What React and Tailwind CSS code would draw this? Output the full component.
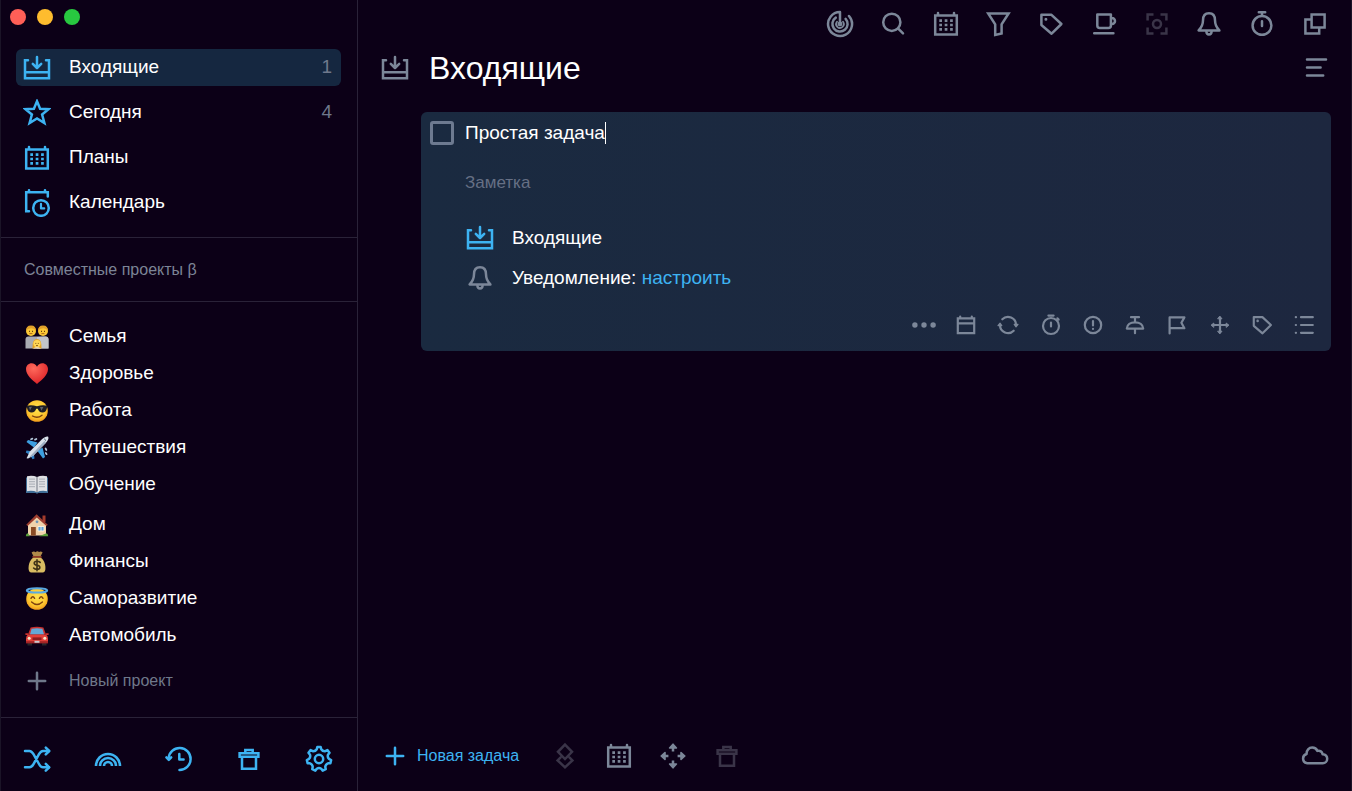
import { useState } from 'react'

const BLUE = 'text-[#3db3f2]'
const GRAY = 'text-[#7c8799]'
const DIM = 'text-[#3a3448]'

export default function App() {

    const [selected, setSelected] = useState('Входящие')

    return (
        <div className="min-h-screen flex bg-[#0c0017] border-x border-[#1b1427] text-white font-['Liberation_Sans',Arial,sans-serif]">
            <Sidebar selected={selected} onSelect={setSelected} />

            <main className="flex-1 min-w-0 flex flex-col">
                <TopBar />

                <div className="flex items-center pl-[23px] pr-[21px] h-10">
                    <span className={GRAY}><InboxIcon /></span>
                    <h1 className="flex-1 ml-5 text-[32px] leading-10">Входящие</h1>
                    <button type="button" aria-label="Меню" className={GRAY}><MenuIcon /></button>
                </div>

                <TaskCard />
                <BottomBar />
            </main>
        </div>
    )
}

/* ---------- Sidebar ---------- */

const navItems = [
    { label: 'Входящие', icon: InboxIcon, count: 1 },
    { label: 'Сегодня', icon: StarIcon, count: 4 },
    { label: 'Планы', icon: PlansIcon },
    { label: 'Календарь', icon: CalendarClockIcon },
]

const projectGroups = [
    [
        { label: 'Семья', icon: FamilyEmoji },
        { label: 'Здоровье', icon: HeartEmoji },
        { label: 'Работа', icon: CoolEmoji },
        { label: 'Путешествия', icon: PlaneEmoji },
        { label: 'Обучение', icon: BookEmoji },
    ],
    [
        { label: 'Дом', icon: HouseEmoji },
        { label: 'Финансы', icon: MoneyEmoji },
        { label: 'Саморазвитие', icon: HaloEmoji },
        { label: 'Автомобиль', icon: CarEmoji },
    ],
]

const footerItems = [
    { label: 'Перемешать', icon: ShuffleIcon },
    { label: 'Радуга', icon: RainbowIcon },
    { label: 'История', icon: HistoryIcon },
    { label: 'Корзина', icon: TrashIcon },
    { label: 'Настройки', icon: GearIcon },
]

function Sidebar({ selected, onSelect }) {
    return (
        <aside className="w-[357px] shrink-0 flex flex-col border-r border-[#2a2238]">

            {/* Window buttons */}
            <div className="flex gap-[11px] pl-[9px] pt-[9px]">
                <button type="button" aria-label="Закрыть" className="size-4 rounded-full bg-[#ff5f57]" />
                <button type="button" aria-label="Свернуть" className="size-4 rounded-full bg-[#febc2e]" />
                <button type="button" aria-label="Развернуть" className="size-4 rounded-full bg-[#28c840]" />
            </div>

            <nav className="flex flex-col gap-2 mt-6 px-4 pb-4 -ml-px">
                {navItems.map(({ label, icon: Icon, count }) => (
                    <button
                        key={label}
                        type="button"
                        onClick={() => onSelect(label)}
                        className={`flex items-center h-[37px] pl-[7px] pr-[9px] rounded-md text-left ${selected === label ? 'bg-[#152740]' : ''}`}
                    >
                        <span className={BLUE}><Icon /></span>
                        <span className="flex-1 ml-[18px] text-[19px]">{label}</span>
                        {count && <span className="text-[19px] text-[#6f788c]">{count}</span>}
                    </button>
                ))}
            </nav>

            <h2 className="border-y border-[#2a2238] pl-[23px] text-base leading-[63px] text-[#7c8496]">
                Совместные проекты β
            </h2>

            <div className="flex flex-col gap-[3px] pt-4">
                {projectGroups.map((group, i) => (
                    <ul key={i}>
                        {group.map(({ label, icon: Icon }) => (
                            <li key={label}>
                                <a href="#" className="flex items-center h-[37px] pl-6">
                                    <Icon />
                                    <span className="ml-5 text-[19px]">{label}</span>
                                </a>
                            </li>
                        ))}
                    </ul>
                ))}
            </div>

            <button type="button" className="flex items-center h-[37px] mt-2 pl-[22px] text-base text-[#6f788a]">
                <PlusIcon />
                <span className="ml-[18px]">Новый проект</span>
            </button>

            <div className={`flex justify-between mt-auto border-t border-[#2a2238] pt-[27px] pb-[18px] pl-[22px] pr-6 ${BLUE}`}>
                {footerItems.map(({ label, icon: Icon }) => (
                    <button key={label} type="button" aria-label={label}><Icon /></button>
                ))}
            </div>
        </aside>
    )
}

/* ---------- Main area ---------- */

const topItems = [
    { label: 'Обзор', icon: RadarIcon },
    { label: 'Поиск', icon: SearchIcon },
    { label: 'Планы', icon: PlansIcon },
    { label: 'Фильтр', icon: FilterIcon },
    { label: 'Метки', icon: TagIcon },
    { label: 'Перерыв', icon: CupIcon },
    { label: 'Фокус', icon: FocusIcon, dim: true },
    { label: 'Уведомления', icon: BellIcon },
    { label: 'Таймер', icon: TimerIcon },
    { label: 'Новое окно', icon: WindowsIcon },
]

const taskItems = [
    { label: 'Ещё', icon: DotsIcon },
    { label: 'Дата', icon: DateIcon },
    { label: 'Повтор', icon: RepeatIcon },
    { label: 'Таймер', icon: StopwatchIcon },
    { label: 'Приоритет', icon: AlertIcon },
    { label: 'Закрепить', icon: PinIcon },
    { label: 'Флаг', icon: FlagIcon },
    { label: 'Переместить', icon: MoveIcon },
    { label: 'Метка', icon: TagIcon },
    { label: 'Список', icon: ListIcon },
]

const bottomItems = [
    { label: 'Слои', icon: LayersIcon, dim: true },
    { label: 'Запланировать', icon: PlansIcon },
    { label: 'Переместить', icon: ArrowsIcon },
    { label: 'Удалить', icon: TrashIcon, dim: true },
]

function TopBar() {
    return (
        <div className="flex justify-end pt-[10px] pb-[10px] pr-[22px]">
            <div className="flex justify-between w-[503px]">
                {topItems.map(({ label, icon: Icon, dim }) => (
                    <button key={label} type="button" aria-label={label} className={dim ? DIM : GRAY}>
                        <Icon />
                    </button>
                ))}
            </div>
        </div>
    )
}

function TaskCard() {

    const [title, setTitle] = useState('Простая задача')
    const [note, setNote] = useState('')

    return (
        <section className="ml-[63px] mr-5 mt-6 rounded-md bg-linear-to-r from-[#1a2a40] to-[#1d273f] pb-[14px]">
            <div className="flex items-center pt-[9px] pl-[9px]">
                <input
                    type="checkbox"
                    aria-label="Выполнено"
                    className="appearance-none size-6 rounded-[3px] border-[3px] border-[#6d7a90] checked:bg-[#6d7a90]"
                />
                <input
                    type="text"
                    aria-label="Название"
                    value={title}
                    onChange={(e) => setTitle(e.target.value)}
                    className="ml-[11px] h-6 field-sizing-content bg-transparent outline-none text-[19px]"
                />
                <span className="w-px h-[22px] bg-white" />
            </div>

            <div className="pl-11 pt-[26px]">
                <input
                    type="text"
                    aria-label="Заметка"
                    placeholder="Заметка"
                    value={note}
                    onChange={(e) => setNote(e.target.value)}
                    className="block w-full h-6 bg-transparent outline-none text-[17px] placeholder:text-[#667085]"
                />

                <div className="flex items-center h-10 mt-[23px] ml-px">
                    <span className={BLUE}><InboxIcon /></span>
                    <span className="ml-[18px] text-[19px]">Входящие</span>
                </div>
                <div className="flex items-center h-10 ml-px">
                    <span className={GRAY}><BellIcon /></span>
                    <span className="ml-[18px] text-[19px]">
                        Уведомление: <a href="#" className={BLUE}>настроить</a>
                    </span>
                </div>
            </div>

            <div className="flex justify-end mt-[15px] pr-[15px]">
                <div className={`flex justify-between w-[404px] ${GRAY}`}>
                    {taskItems.map(({ label, icon: Icon }) => (
                        <button key={label} type="button" aria-label={label}>
                            <Icon className="size-6" />
                        </button>
                    ))}
                </div>
            </div>
        </section>
    )
}

function BottomBar() {
    return (
        <div className="flex items-center mt-auto pl-[23px] pr-[22px] pb-[21px]">
            <button type="button" className={`flex items-center text-base ${BLUE}`}>
                <PlusIcon />
                <span className="ml-2">Новая задача</span>
            </button>

            <div className="flex gap-[26px] ml-8">
                {bottomItems.map(({ label, icon: Icon, dim }) => (
                    <button key={label} type="button" aria-label={label} className={dim ? DIM : GRAY}>
                        <Icon />
                    </button>
                ))}
            </div>

            <button type="button" aria-label="Синхронизация" className={`ml-auto ${GRAY}`}>
                <CloudIcon />
            </button>
        </div>
    )
}

/* ---------- Icons ---------- */

function Icon({ className = 'size-7', box = 28, width = 2.5, children }) {
    return (
        <svg
            className={`block ${className}`}
            viewBox={`0 0 ${box} ${box}`}
            fill="none"
            stroke="currentColor"
            strokeWidth={width}
            strokeLinecap="round"
            strokeLinejoin="round"
            aria-hidden="true"
        >
            {children}
        </svg>
    )
}

function InboxIcon(props) {
    return (
        <Icon {...props}>
            <path strokeLinejoin="miter" d="M5 6.3H2V24.3H26V6.3H23M2 18.3H26" />
            <path d="M14 3V13.5M9.8 9.8L14 14L18.2 9.8" />
        </Icon>
    )
}

function StarIcon(props) {
    return (
        <Icon {...props}>
            <path strokeLinejoin="miter" strokeMiterlimit="3" d="M14 2.3L17.1 9.7L25.6 10.2L19.1 15.5L21.4 24L14 19.5L6.6 24L8.9 15.5L2.4 10.2L10.9 9.7Z" />
        </Icon>
    )
}

function PlansIcon(props) {
    return (
        <Icon {...props}>
            <path strokeLinejoin="miter" d="M3.2 5.4H24.8V24.4H3.2ZM6 3V5M22 3V5" />
            <path
                strokeLinecap="butt"
                strokeWidth="2.7"
                strokeDasharray="2.7 2.7"
                d="M7.3 10.6H20.8M7.3 15H20.8M7.3 19.4H20.8"
            />
        </Icon>
    )
}

function CalendarClockIcon(props) {
    return (
        <Icon {...props}>
            <path strokeLinejoin="miter" d="M6 22.3H3.2V3.3H24.8V7.5M6 1.2V3M22 1.2V3" />
            <circle cx="18" cy="19" r="7.8" />
            <path d="M18 14.8V19.4H21.2" strokeWidth="2.2" />
        </Icon>
    )
}

function ShuffleIcon(props) {
    return (
        <Icon {...props}>
            <path d="M2 6H6.5C8.5 6 9.5 7.5 10.5 9.2L16 19C17 21 18 22.3 20 22.3H26M2 22.3H6.5C8.5 22.3 9.5 21 10.5 19.2L16 9.2C17 7.4 18 6 20 6H26" />
            <path d="M22.8 2.6L26.2 6L22.8 9.4M22.8 18.9L26.2 22.3L22.8 25.7" />
        </Icon>
    )
}

function RainbowIcon(props) {
    return (
        <Icon {...props} width={2.6}>
            <path strokeLinecap="butt" d="M2 21A12 12 0 0 1 26 21M6 21A8 8 0 0 1 22 21M10 21A4 4 0 0 1 18 21" />
        </Icon>
    )
}

function HistoryIcon(props) {
    return (
        <Icon {...props}>
            <path d="M4.6 13.4A11 11 0 1 1 15.5 25" />
            <path d="M2.4 12.4L4.8 14.8L7.2 12.4M15.3 9V14.5H19.6" />
        </Icon>
    )
}

function TrashIcon(props) {
    return (
        <Icon {...props}>
            <path strokeLinejoin="miter" d="M4.6 8.2H23.4V11.8H4.6ZM7 12V23.8H21V12M10.3 8V4.9H17.7V8" />
        </Icon>
    )
}

const gearPath = Array.from({ length: 7 }, (_, i) => {
    const at = (offset, radius) => {
        const angle = (i / 7 + offset) * Math.PI * 2 - Math.PI / 2
        return `${(14 + Math.cos(angle) * radius).toFixed(2)} ${(14 + Math.sin(angle) * radius).toFixed(2)}`
    }
    return `${i ? 'L' : 'M'}${at(-0.022, 12.2)}L${at(0.022, 12.2)}L${at(0.036, 10)}Q${at(0.0714, 8.4)} ${at(0.107, 10)}`
}).join('') + 'Z'

function GearIcon(props) {
    return (
        <Icon {...props}>
            <path d={gearPath} />
            <circle cx="14" cy="14" r="4.2" />
        </Icon>
    )
}

function PlusIcon(props) {
    return (
        <Icon {...props}>
            <path d="M14 5.8V22.2M5.8 14H22.2" />
        </Icon>
    )
}

function RadarIcon(props) {
    return (
        <Icon {...props}>
            <path d="M23 6A12 12 0 1 1 14 2V13.5" />
            <path d="M19.6 8.8A7.6 7.6 0 1 1 9.8 7.6" />
            <path d="M17 11.8A3.8 3.8 0 1 1 11 11.7" strokeWidth="1.8" />
            <circle cx="14" cy="14" r="1.2" fill="currentColor" />
        </Icon>
    )
}

function SearchIcon(props) {
    return (
        <Icon {...props}>
            <circle cx="12.8" cy="12.3" r="8.6" />
            <path d="M19 18.3L24 23.3" />
        </Icon>
    )
}

function FilterIcon(props) {
    return (
        <Icon {...props}>
            <path strokeLinejoin="miter" d="M4.2 3.4H24.6L17.6 14.3V23.5L11.2 25V14.3Z" />
        </Icon>
    )
}

function TagIcon(props) {
    return (
        <Icon {...props}>
            <path d="M4.4 4.8H14.5L24.4 14L14.6 23.7L4.4 15Z" />
            <circle cx="8.9" cy="9.2" r="0.7" fill="currentColor" strokeWidth="1.6" />
        </Icon>
    )
}

function CupIcon(props) {
    return (
        <Icon {...props}>
            <path d="M7.3 4.6H20.9V15.5C20.9 17 19.9 18 18.4 18H9.8C8.3 18 7.3 17 7.3 15.5ZM20.9 8H22A3 3 0 0 1 22 14H20.9M4.2 23.2H23.4" />
        </Icon>
    )
}

function FocusIcon(props) {
    return (
        <Icon {...props}>
            <path strokeLinecap="butt" strokeLinejoin="miter" d="M4.6 10.5V4.6H10.5M17.5 4.6H23.4V10.5M23.4 17.5V23.4H17.5M10.5 23.4H4.6V17.5" />
            <circle cx="14" cy="14" r="4" />
        </Icon>
    )
}

function BellIcon(props) {
    return (
        <Icon {...props}>
            <path d="M14 3.2C9.8 3.2 8 6.5 8 10.3C8 14.5 7 17.2 3.6 20.4H24.4C21 17.2 20 14.5 20 10.3C20 6.5 18.2 3.2 14 3.2Z" />
            <path d="M11.4 21.5A2.6 2.9 0 0 0 16.6 21.5" />
        </Icon>
    )
}

function TimerIcon(props) {
    return (
        <Icon {...props}>
            <circle cx="14" cy="15.4" r="9.4" />
            <path d="M10.8 2.2H17.2M14 2.2V5.5M14 11.3V16" />
        </Icon>
    )
}

function StopwatchIcon(props) {
    return (
        <Icon {...props} box={24} width={2.2}>
            <circle cx="12" cy="13" r="8" />
            <path d="M9.4 2.6H14.6M12 9.6V13.4M18.4 5.4L19.6 6.6" />
        </Icon>
    )
}

function WindowsIcon(props) {
    return (
        <Icon {...props}>
            <path strokeLinejoin="miter" d="M10.6 4.6H23.6V17.6H10.6ZM10 9.4H4.4V23.4H18.2V18" />
        </Icon>
    )
}

function MenuIcon(props) {
    return (
        <Icon {...props}>
            <path d="M5 5.6H24M5 13.6H18.6M5 21.6H21.2" />
        </Icon>
    )
}

function DotsIcon(props) {
    return (
        <Icon {...props} box={24} width={0}>
            <circle cx="2.9" cy="12" r="2.7" fill="currentColor" />
            <circle cx="12" cy="12" r="2.7" fill="currentColor" />
            <circle cx="21.1" cy="12" r="2.7" fill="currentColor" />
        </Icon>
    )
}

function DateIcon(props) {
    return (
        <Icon {...props} box={24} width={2.2}>
            <path strokeLinejoin="miter" d="M3.8 5.4H20.2V20.2H3.8ZM3.8 10.4H20.2M6.2 3.6V5M17.8 3.6V5" />
        </Icon>
    )
}

function RepeatIcon(props) {
    return (
        <Icon {...props} box={24} width={2.2}>
            <path d="M6.3 6.3A8 8 0 0 1 20 12M17.7 17.7A8 8 0 0 1 4 12" />
            <path fill="currentColor" strokeWidth="1.2" d="M18.2 11.4H22L20 13.8ZM2 12.6H5.8L4 10.2Z" />
        </Icon>
    )
}

function AlertIcon(props) {
    return (
        <Icon {...props} box={24} width={2.2}>
            <circle cx="12" cy="12" r="8.2" />
            <path d="M12 8V12.4M12 15.8V16" />
        </Icon>
    )
}

function PinIcon(props) {
    return (
        <Icon {...props} box={24} width={2.2}>
            <path d="M8 4.2H16M12 4.2V9M3.8 15.6C4 11.5 7.5 9.3 12 9.3S20 11.5 20.2 15.6ZM12 15.6V20.2" />
        </Icon>
    )
}

function FlagIcon(props) {
    return (
        <Icon {...props} box={24} width={2.2}>
            <path d="M4.6 20.5V4.4H19.4L16.4 9.8L19.4 15.2H4.6" />
        </Icon>
    )
}

function MoveIcon(props) {
    return (
        <Icon {...props} box={24} width={2.2}>
            <path d="M12 4.5V19.5M4.5 12H19.5" />
            <path
                fill="currentColor"
                strokeWidth="1"
                d="M12 3.4L14 5.8H10ZM12 20.6L14 18.2H10ZM3.4 12L5.8 10V14ZM20.6 12L18.2 10V14Z"
            />
        </Icon>
    )
}

function ListIcon(props) {
    return (
        <Icon {...props} box={24} width={2.2}>
            <path d="M9 4.2H20.8M9 12H20.8M9 19.8H20.8M3.8 4.2H4M3.8 12H4M3.8 19.8H4" />
        </Icon>
    )
}

function LayersIcon(props) {
    return (
        <Icon {...props}>
            <path strokeLinejoin="miter" d="M14 2.6L21 9.8L14 17L7 9.8ZM9.4 15.6L6.6 18.4L14 25.4L21.4 18.4L18.6 15.6" />
        </Icon>
    )
}

function ArrowsIcon(props) {
    return (
        <Icon {...props}>
            <path
                fill="currentColor"
                strokeWidth="1.6"
                d="M14 2.2L17.4 6H10.6ZM14 25.8L17.4 22H10.6ZM2.2 14L6 10.6V17.4ZM25.8 14L22 10.6V17.4Z"
            />
            <path strokeLinecap="butt" d="M14 5V9.4M14 18.6V23M5 14H9.4M18.6 14H23" />
        </Icon>
    )
}

function CloudIcon(props) {
    return (
        <Icon {...props}>
            <path d="M6.2 21.2A4.7 4.7 0 0 1 5.6 12C5.4 8.2 8 5.6 11.2 5.6C13.6 5.6 15.6 7 16.4 8.9C19 8.2 21.2 9.8 21.6 12.2C24.4 12.4 26.2 14.2 26.2 16.7C26.2 19.3 24.2 21.2 21.8 21.2Z" />
        </Icon>
    )
}

/* ---------- Project pictures ---------- */

function Emoji({ children }) {
    return (
        <svg className="block size-6" viewBox="0 0 24 24" aria-hidden="true">
            {children}
        </svg>
    )
}

function FamilyEmoji() {
    return (
        <Emoji>
            <path d="M0.5 23.6V14.5Q0.5 11.5 3.5 11.5H20.5Q23.5 11.5 23.5 14.5V23.6Z" fill="#a9abb2" />
            <path d="M12 12V23.6H23.5V14.5Q23.5 11.5 20.5 11.5Z" fill="#c2c4ca" />
            <circle cx="6" cy="6" r="5" fill="#fbc736" />
            <circle cx="18" cy="6" r="5" fill="#fbc736" />
            <path d="M1 6Q0.8 0.4 6 0.4T11 6Q9.5 3 6 3.2T1 6ZM13 6Q12.8 0.4 18 0.4T23 6Q21.5 3 18 3.2T13 6Z" fill="#e0a02a" />
            <path d="M4 6.3h1M7 6.3h1M16 6.3h1M19 6.3h1" stroke="#6b430c" strokeWidth="1.2" />
            <path d="M4.4 8.6h3M16.4 8.6h3" stroke="#a95f14" strokeWidth="0.9" />
            <path d="M7.5 23.6Q7 14 12 14T16.5 23.6Z" fill="#e5a225" />
            <circle cx="12" cy="18.6" r="3.6" fill="#ffd655" />
            <path d="M10.3 18.4h1M12.8 18.4h1M11 20.6h2" stroke="#7d4d10" strokeWidth="0.9" />
            <path d="M8 23.6Q12 20.8 16 23.6Z" fill="#eceef2" />
        </Emoji>
    )
}

function HeartEmoji() {
    return (
        <Emoji>
            <defs>
                <radialGradient id="heart" cx="0.35" cy="0.25" r="0.8">
                    <stop offset="0" stopColor="#ff6a5c" />
                    <stop offset="1" stopColor="#dc2126" />
                </radialGradient>
            </defs>
            <path d="M12 22C7 18 1 13 1 7.1C1 3.5 3.6 1.3 6.6 1.3C9 1.3 11 2.5 12 4.7C13 2.5 15 1.3 17.4 1.3C20.4 1.3 23 3.5 23 7.1C23 13 17 18 12 22Z" fill="url(#heart)" />
        </Emoji>
    )
}

function YellowFace() {
    return (
        <>
            <defs>
                <radialGradient id="face" cx="0.5" cy="0.4" r="0.6">
                    <stop offset="0" stopColor="#ffe34f" />
                    <stop offset="0.7" stopColor="#fdc62f" />
                    <stop offset="1" stopColor="#f09a1b" />
                </radialGradient>
            </defs>
            <circle cx="12" cy="12" r="10.8" fill="url(#face)" />
        </>
    )
}

function CoolEmoji() {
    return (
        <Emoji>
            <YellowFace />
            <path d="M1.6 6.7Q7 5.5 12 7.3Q17 5.5 22.4 6.7L22 9Q21 13.5 17.4 13.5Q13.8 13.5 12.8 9.8H11.2Q10.2 13.5 6.6 13.5Q3 13.5 2 9Z" fill="#1d1d24" />
            <path d="M4 8L7 7.8L5 11.5M15 8.1L18.4 7.9L16.4 11.7" fill="#5d606b" />
            <path d="M7.5 17Q12.5 19.8 17 16.2" fill="none" stroke="#7d4110" strokeWidth="1.4" strokeLinecap="round" />
        </Emoji>
    )
}

function PlaneEmoji() {
    return (
        <Emoji>
            <path d="M12.5 6.5L3 4L1.5 6L9 11.5ZM17.5 11.5L20 21L18 22.5L12.5 15Z" fill="#3d9fe0" />
            <path d="M5.5 15L1.5 14.5L0.8 16.5L5 19ZM9 18.5L9.5 22.5L7.5 23.2L5 19Z" fill="#2f7fc4" />
            <path d="M23.2 0.8C24 2 23 4.6 21 6.8L8.5 19.4L3 22.5L1.6 22.2L4.8 15.4L17.2 3C19.4 1 22 0 23.2 0.8Z" fill="#d9e1ea" />
            <path d="M21 6.8L8.5 19.4L3 22.5L19.5 5Z" fill="#9eafc4" />
            <path d="M6 3.2L7.4 2.6M10 3.6L11.4 3M20.6 12.5L21.4 14M20.8 17L21.6 18.2" stroke="#b3c5d9" strokeWidth="1.7" strokeLinecap="round" />
            <path d="M19.2 2.8L21 4.6" stroke="#3b4a60" strokeWidth="1" />
        </Emoji>
    )
}

function BookEmoji() {
    return (
        <Emoji>
            <path d="M1 4.5H23V20H13.5L12 20.8L10.5 20H1Z" fill="#3f6d96" />
            <path d="M2 3.2Q8 2.2 12 4Q16 2.2 22 3.2V18.2Q16 17.2 12 19.2Q8 17.2 2 18.2Z" fill="#e0e1e4" />
            <path d="M12 4V19.2" stroke="#8a8f98" strokeWidth="1.3" />
            <path d="M4 6.1H10M4 8.6H10M4 11.1H10M4 13.6H10M14 6.1H20M14 8.6H20M14 11.1H20M14 13.6H20" stroke="#b2b6bd" strokeWidth="1.1" />
        </Emoji>
    )
}

function HouseEmoji() {
    return (
        <Emoji>
            <path d="M17.5 2.5H20.5V9H17.5Z" fill="#a33b2c" />
            <path d="M3 11L12 3L21 11V22.6H3Z" fill="#f0d3ac" />
            <path d="M1.2 11.8L11.6 1.2L22.8 11.8L21.4 13L11.8 4.4L2.6 13Z" fill="#9c3d2f" />
            <path d="M6 14H10.8V22.6H6Z" fill="#8a4b25" />
            <path d="M13 13.5H19V18H13Z" fill="#5fa5d9" stroke="#fff4e2" strokeWidth="0.9" />
            <path d="M16 13.5V18" stroke="#fff4e2" strokeWidth="0.8" />
            <circle cx="12" cy="8.8" r="1.4" fill="#6b94b8" />
            <path d="M0.8 23.2Q1 20 3.2 20.4L4.8 23.2ZM23.2 23.2Q23 20 20.8 20.4L14 23.2Z" fill="#589f3a" />
        </Emoji>
    )
}

function MoneyEmoji() {
    return (
        <Emoji>
            <path d="M8.6 6.5L6.6 2.4Q9 0.6 10.6 2.2Q12.4 0.2 14 2Q16 0.6 17.6 2.6L15.4 6.5Z" fill="#b08a4a" />
            <path d="M8.6 7.2H15.4C19.5 10.4 20.6 14.5 20.4 19C20.2 22 18.6 22.6 16.5 22.6H7.5C5.4 22.6 3.8 22 3.6 19C3.4 14.5 4.5 10.4 8.6 7.2Z" fill="#d9bc62" />
            <path d="M8 6.9H16" stroke="#8f3a25" strokeWidth="1.6" strokeLinecap="round" />
            <path d="M15.2 12.4Q14 11.2 12 11.2C8.4 11.2 8.2 14.8 12 15.2C16 15.7 15.6 19.4 12 19.4Q9.8 19.4 8.6 18M12 9.8V20.8" fill="none" stroke="#3e3217" strokeWidth="1.6" strokeLinecap="round" />
        </Emoji>
    )
}

function HaloEmoji() {
    return (
        <Emoji>
            <YellowFace />
            <ellipse cx="12" cy="3.4" rx="10.2" ry="2.2" fill="none" stroke="#59a9e2" strokeWidth="2" />
            <path d="M6 11.3Q7.8 8.1 9.6 11.3M14.4 11.3Q16.2 8.1 18 11.3M6.6 15.1Q12 20.1 17.4 15.1" fill="none" stroke="#7d4110" strokeWidth="1.4" strokeLinecap="round" />
        </Emoji>
    )
}

function CarEmoji() {
    return (
        <Emoji>
            <path d="M2.5 18H7V21.6H2.5ZM17 18H21.5V21.6H17Z" fill="#26262c" />
            <path d="M5.6 3.4Q12 2.2 18.4 3.4L21 10.5H3Z" fill="#c9302d" />
            <path d="M6.6 4.8Q12 3.8 17.4 4.8L19 10.4H5Z" fill="#63a9d8" />
            <path d="M0.4 9.2H3.2V11H0.4ZM20.8 9.2H23.6V11H20.8Z" fill="#c9302d" />
            <path d="M3 10.4H21Q23 12 23 14.6V19H1V14.6Q1 12 3 10.4Z" fill="#e2403a" />
            <path d="M7.5 13.4H16.5V16H7.5Z" fill="#8f1d1f" />
            <circle cx="4.2" cy="14.2" r="1.5" fill="#f6e6c8" />
            <circle cx="19.8" cy="14.2" r="1.5" fill="#f6e6c8" />
            <path d="M1 17.2H23V19.4H1Z" fill="#a32325" />
            <path d="M9.5 16.8H14.5V18.8H9.5Z" fill="#c9c9ce" />
        </Emoji>
    )
}
